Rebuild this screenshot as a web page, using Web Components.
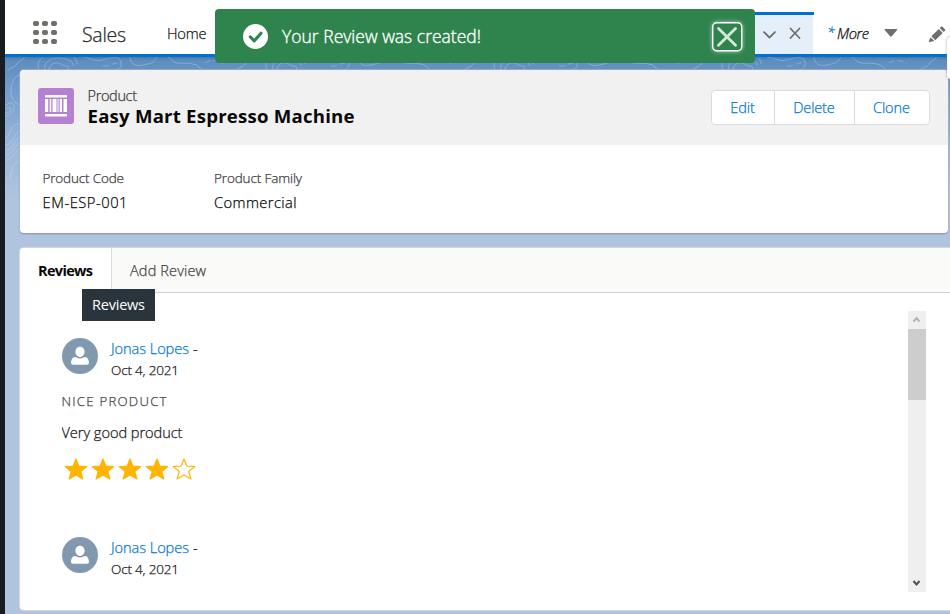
<!DOCTYPE html>
<html lang="en">
<head>
<meta charset="utf-8">
<title>Sales - Product</title>
<style>
html,body{margin:0;height:100%;overflow:hidden}
body{font-family:"Open Sans","Noto Sans",sans-serif;color:#181818;font-weight:300;-webkit-text-stroke:.25px currentColor}
</style>
</head>
<body>
<sales-app></sales-app>
<script>
const define = (name, html, setup) => {
  const t = document.createElement('template');
  t.innerHTML = html;
  customElements.define(name, class extends HTMLElement {
    connectedCallback() {
      if (this.shadowRoot) return;
      this.attachShadow({ mode: 'open' }).append(t.content.cloneNode(true));
      if (setup) setup(this, this.shadowRoot);
    }
  });
};

define('sales-app', `
<style>
:host{display:grid;grid-template-columns:5px 945px;height:614px;background:#181b20;overflow:hidden;position:relative}
main{background:#b0c4df;height:614px;overflow:hidden;position:relative}
contour-bg{position:absolute;left:0;top:57px}
.cards{position:relative;padding:13px 0 0 15px;display:flex;flex-direction:column;gap:15px}
toast-note{position:absolute;left:215px;top:9px}
hover-tip{position:absolute;left:82px;top:289px}
.peek{position:absolute;left:947px;top:37px;width:20px;height:42px;background:#fff;border-radius:4px;box-shadow:0 0 3px #777a}
</style>
<div></div>
<main>
<contour-bg></contour-bg>
<nav-bar></nav-bar>
<div class="cards"><product-card></product-card><tab-card>
<review-item><ui-text slot="title" w="105">NICE PRODUCT</ui-text><ui-text slot="text" w="121">Very good product</ui-text><star-row slot="rating"></star-row></review-item><review-item></review-item></tab-card></div>
</main>
<div class="peek"></div>
<toast-note><ui-text w="199">Your Review was created!</ui-text></toast-note>
<hover-tip><ui-text w="53">Reviews</ui-text></hover-tip>
`);

define('contour-bg', `
<style>:host{display:block;width:945px;height:160px;background:linear-gradient(#5b8cbd 0,#719bca 30px,#9cb8db 90px,#b0c4df 145px)}
svg{display:block}</style>
<svg width="945" height="160" fill="none" stroke="#d6e6f5" stroke-opacity=".32">
<defs><g id="p">
<path d="M34 13c-4-8 4-16 16-18s22 4 22 12M40 13c-2-7 5-12 13-12s16 3 15 8M44 13c0-5 5-8 9-7s5 3 8 3 3 2 2 5"/>
<path d="M20-2c0 5-6 5-8 9s-8 3-9 7"/>
<path d="M78 0c8 1 12 5 19 3s18-5 19 2-3 7-8 9M125-2c-1 8 5 12 13 10s10-1 14-8M158-1c8 0 8 6 14 7s18-2 24 6"/>
<path d="M200 6c8-5 12-2 18 1M98 9c6 1 9-3 14-3" stroke-dasharray="6 3"/>
</g></defs>
<use href="#p"/><use href="#p" x="228"/><use href="#p" x="456"/><use href="#p" x="684"/><use href="#p" x="912"/>
<path d="M15 18c-5 0-9 8-9 16s4 12 9 14M-2 50c5-4 12-7 11 1s-10 10-13 6M-1 53c3-3 8-3 7 0s-5 4-7 2M15 66c-5 1-9 4-10 9s-4 6-6 6M15 73c-4 2-5 7-8 11s-5 4-8 4M15 79c-3 2-4 6-7 10s-5 4-8 4M15 85c-3 1-5 9-14 14M15 91c-3 2-5 8-14 13M15 104c-5 0-11 10-9 18"/>
</svg>`);

define('nav-bar', `
<style>
:host{display:flex;height:54px;background:#fff;border-bottom:3px solid #0070d2;box-shadow:0 1px 3px #0003;position:relative}
:host>*{flex:none}
.w{margin:20px 0 0 28px;width:26px;height:26px}
.s{font-size:19.5px;margin:22px 0 0 23px;line-height:26px;width:44px;color:#2b2826}
.h{font-size:14.700px;margin:21px 0 0 41px;width:40px;line-height:24px}
.tab{box-sizing:border-box;margin:12px 0 0 548px;width:59px;border-top:3px solid #0070d2;background:linear-gradient(#e5effa,#e5effa) 0 0/58px 100% no-repeat;height:42px}
.m{margin:21px 0 0 14px;line-height:24px;display:flex;gap:5px;color:#080707;font-style:italic;font-size:14.700px;width:42px}
.m i{color:#0070d2;width:5px;margin-left:-1px;font-size:14px}
svg{display:block}
</style>
<svg class="w" viewBox="0 0 26 26" fill="#706e6b"><rect y="1" width="6" height="5" rx="2"/><rect x="9" y="1" width="6" height="5" rx="2"/><rect x="18" y="1" width="6" height="5" rx="2"/><rect y="10" width="6" height="5" rx="2"/><rect x="9" y="10" width="6" height="5" rx="2"/><rect x="18" y="10" width="6" height="5" rx="2"/><rect y="19" width="6" height="5" rx="2"/><rect x="9" y="19" width="6" height="5" rx="2"/><rect x="18" y="19" width="6" height="5" rx="2"/></svg>
<div class="s"><ui-text w="44">Sales</ui-text></div>
<div class="h"><ui-text w="39.500">Home</ui-text></div>
<div class="tab"><svg width="58" height="39" fill="none" stroke="#706e6b" stroke-linecap="round" stroke-linejoin="round"><path d="M9 17.200l5.500 5.300 5.500-5.300" stroke-width="1.800"/><path d="M35.500 13.500l9 9.500M44.500 13.500l-9 9.500" stroke-width="1.800"/></svg></div>
<div class="m"><i>*</i><ui-text w="32">More</ui-text></div>
<svg width="75" height="54" style="margin-left:9px" fill="#706e6b"><path d="M6 29h11.800q1 0 .3.900l-5.600 6.500q-.6.600-1.200 0l-5.600-6.500q-.6-.9.300-.900z"/><path d="M62 26.700q.8-.6 1.500.1l2.400 2.400q.7.800 0 1.500l-1.300 1.300-3.900-3.900zM59.800 29l3.900 3.900-7.400 7.300-3.900-3.900zM51.500 37.300l3.800 3.800-4.700 1q-.9.100-.8-.8z"/></svg>
`);

define('toast-note', `
<style>
:host{box-sizing:border-box;display:flex;align-items:center;width:540px;height:54px;padding:0 12.500px 0 27px;background:#2f844d;color:#fff;border-radius:4px;font-size:17.500px;line-height:26px;-webkit-text-stroke:.35px currentColor}
slot{display:block}
div{margin-left:13px;flex:1}
svg{flex:none}
</style>
<svg width="27" height="27"><circle cx="13.500" cy="13.500" r="12.500" fill="#fff"/><path d="M8.200 13.800l4 4.100 6.800-7.700" stroke="#2f844d" stroke-width="3" stroke-linecap="round" stroke-linejoin="round" fill="none"/></svg>
<div><slot></slot></div>
<svg width="32" height="34" style="filter:drop-shadow(0 0 2px #fff9);margin-top:4px"><rect x="1.700" y="1.700" width="29" height="28" rx="4" fill="#2f844d" stroke="#fff" stroke-width="1.400"/><path d="M7.500 7.500l17 16.800M24.500 7.500l-17 16.800" stroke="#d4e9da" stroke-width="2.800" stroke-linecap="round"/></svg>
`);

define('hover-tip', `
<style>:host{box-sizing:border-box;width:73px;height:32px;padding:4px 10px;background:#2a343d;color:#fff;font-size:14.500px;line-height:23px;font-weight:400;-webkit-text-stroke:0}</style><slot></slot>`);

define('product-card', `
<style>
:host{display:block;width:928px;height:163px;background:#fff;border-radius:4px;box-shadow:0 1px 2px #5f7690aa,0 0 0 1px #c9d0d970;overflow:hidden}
header{display:flex;height:75px;background:#f1f1f1}
.ic{margin:18px 0 0 18px;width:36px;height:36px;flex:none}
.t{margin:16px 0 0 13.500px;flex:1}
.t div{font-size:14.500px;line-height:19px;color:#3a3a3a}
.t h1{margin:0;font-size:18.600px;line-height:21px;font-weight:680;color:#080707;-webkit-text-stroke:0}
.b{box-sizing:border-box;display:flex;margin:20px 18.500px 0 0;width:219px;height:35px;border:1px solid #dddbda;border-radius:4px;background:#fff;color:#0176d3;font-size:14.500px;line-height:33px}
.b span{box-sizing:border-box;text-align:center;border-right:1px solid #dddbda}
.b span:last-child{border:0}
.f{display:flex;padding:21px 0 0 22.500px}
.f div{width:171.500px}
p{margin:0;font-size:14.700px;line-height:25px;color:#080707}
p.l{font-size:13.500px;line-height:24px;color:#3a3a3a}
</style>
<header>
<svg class="ic" viewBox="0 0 36 36"><rect width="36" height="36" rx="3" fill="#b781d3"/><g fill="#fff"><rect x="7" y="7" width="22" height="2.400" rx=".5"/><rect x="7" y="26" width="22" height="2.400" rx=".5"/><rect x="7" y="11" width="3.200" height="13"/><rect x="11.700" y="11" width="1.500" height="13"/><rect x="14.500" y="11" width="4" height="13"/><rect x="19.500" y="11" width="1" height="13"/><rect x="21.700" y="11" width="2.300" height="13"/><rect x="25.500" y="11" width="3.500" height="13"/></g></svg>
<div class="t"><div><ui-text w="49.500">Product</ui-text></div><h1><ui-text w="267">Easy Mart Espresso Machine</ui-text></h1></div>
<div class="b"><span style="width:63px"><ui-text w="24.500">Edit</ui-text></span><span style="width:80px"><ui-text w="41.500">Delete</ui-text></span><span style="width:74px"><ui-text w="37">Clone</ui-text></span></div>
</header>
<div class="f"><div><p class="l"><ui-text w="81.500">Product Code</ui-text></p><p><ui-text w="85">EM-ESP-001</ui-text></p></div>
<div><p class="l"><ui-text w="88">Product Family</ui-text></p><p><ui-text w="82.500">Commercial</ui-text></p></div></div>
`);

define('tab-card', `
<style>
:host{display:block;box-sizing:border-box;width:934px;height:362px;background:#fff;border-radius:4px;box-shadow:0 0 0 1px #d8d8d8;overflow:hidden}
.tabs{display:flex;height:44px;font-size:14.500px;line-height:45px;border-bottom:1px solid #d4d2d0;background:#fafaf9}
.a{box-sizing:border-box;width:92px;height:46px;padding-left:18px;background:#fff;border-right:1px solid #dddbda;font-weight:680;color:#080707;-webkit-text-stroke:0}
.n{padding-left:18px;color:#444240}
.body{display:flex;justify-content:space-between;padding:18px 28px 0 42px}
.list{padding-top:27px;height:254px;overflow:hidden}
</style>
<div class="tabs"><div class="a"><ui-text w="55">Reviews</ui-text></div><div class="n"><ui-text w="76">Add Review</ui-text></div></div>
<div class="body"><div class="list"><slot></slot></div><scroll-bar></scroll-bar></div>
`);

define('scroll-bar', `
<style>:host{display:flex;flex-direction:column;justify-content:space-between;width:18px;height:281px;background:#efefef}i{display:block;height:71px;background:#cdcdcd}svg{display:block}</style>
<div><svg width="18" height="18"><path d="M5.500 10.500l3-3.500 3 3.500" fill="none" stroke="#b3b3b3" stroke-width="2"/></svg><i></i></div>
<svg width="18" height="18"><path d="M5.500 7l3 3.500 3-3.500" fill="none" stroke="#505050" stroke-width="2"/></svg>
`);

define('review-item', `
<style>
:host{display:block;height:199px;font-size:14.600px;color:#181818}
.u{display:flex;gap:13px;height:47px}
.n{display:flex;gap:4px;line-height:21px;height:21px}
.n ui-text:first-child{color:#0176d3}
.d{font-size:13.500px;line-height:22px}
.x{font-size:13.200px;line-height:32px;color:#444240}
.p{line-height:32px;margin-top:-1px;height:33px}
.x,.p{margin-left:-.5px}
</style>
<div class="u"><svg width="36" height="36"><circle cx="18" cy="18" r="18" fill="#8199af"/><path d="M18 8.800c2.700 0 4.600 2.300 4.600 5s-1.900 5.200-4.600 5.200-4.600-2.500-4.600-5.200 1.900-5 4.600-5zM13 19c1.200 0 2 1.600 5 1.600s3.800-1.600 5-1.600c2.400 0 4 2.800 4 5.800 0 1.300-.8 2-2 2H11c-1.200 0-2-.7-2-2 0-3 1.600-5.800 4-5.800z" fill="#fff"/></svg>
<div><div class="n"><ui-text w="78">Jonas Lopes</ui-text><ui-text w="5">-</ui-text></div><div class="d"><ui-text w="68">Oct 4, 2021</ui-text></div></div></div>
<div class="x"><slot name="title"></slot></div>
<div class="p"><slot name="text"></slot></div>
<slot name="rating"></slot>
`);

define('star-row', `
<style>:host{display:flex;gap:3px;padding:8px 0 0 1.500px}svg{display:block}</style>`,
(h, r) => {
  for (let i = 0; i < 5; i++) r.innerHTML += `<svg width="24" height="24" fill="${i < 4 ? '#ffb400' : 'none'}" stroke="#ffb400" stroke-width="1.200" stroke-linejoin="round"><path d="M12 2L14.800 9 22.800 9.600 16.700 14.500 18.900 22 12 18.100 5.100 22 7.300 14.500 1.200 9.600 9.200 9z"/></svg>`;
});

/* Inline label whose tracking is adjusted to span the width in its "w" attribute. */
define('ui-text', `<style>:host{display:inline-block;white-space:nowrap;line-height:inherit;vertical-align:top}</style><slot></slot>`,
h => {
  h.style.letterSpacing = '0';
  const n = h.textContent.length - 1, w = +h.getAttribute('w');
  if (n < 1) return;
  const s = (w - h.getBoundingClientRect().width) / n;
  h.style.letterSpacing = s + 'px';
  h.style.marginRight = -s + 'px';
});
</script>
</body>
</html>
